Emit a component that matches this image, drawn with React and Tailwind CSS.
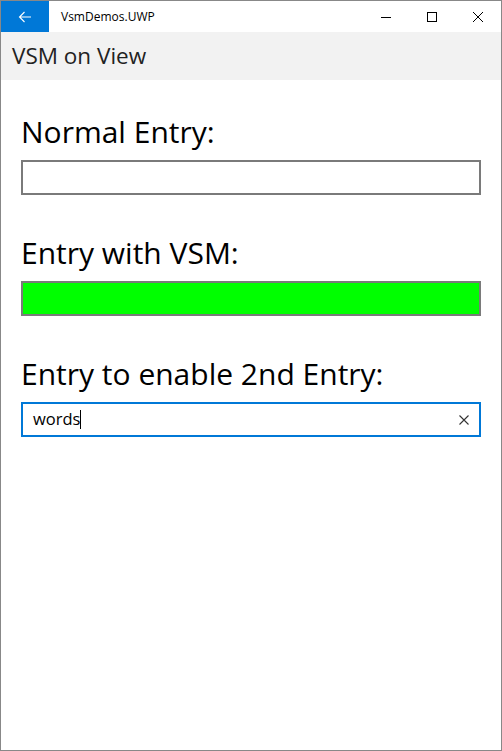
import React from "react";

export default function App() {
  const font = { fontFamily: '"Open Sans", "Noto Sans", sans-serif' };
  return (
    <div className="w-[502px] h-[751px] border border-[#888888] bg-white flex flex-col overflow-hidden" style={font}>
      {/* Title bar */}
      <div className="h-[31px] flex items-center bg-white shrink-0">
        <div className="w-[48px] h-[31px] bg-[#0078d7] flex items-center justify-center">
          <svg width="16" height="16" viewBox="0 0 16 16" fill="none" stroke="white" strokeWidth="1.1">
            <path d="M14 8H2.5M7.5 3L2.5 8l5 5" />
          </svg>
        </div>
        <div className="ml-[12px] text-[12px] text-black">VsmDemos.UWP</div>
        <div className="ml-auto flex items-center h-full">
          <div className="w-[46px] h-full flex items-center justify-center">
            <svg width="10" height="10" viewBox="0 0 10 10"><path d="M0 5.5h10" stroke="black" strokeWidth="1" /></svg>
          </div>
          <div className="w-[46px] h-full flex items-center justify-center">
            <svg width="10" height="10" viewBox="0 0 10 10"><rect x="0.5" y="0.5" width="9" height="9" fill="none" stroke="black" strokeWidth="1" /></svg>
          </div>
          <div className="w-[46px] h-full flex items-center justify-center">
            <svg width="10" height="10" viewBox="0 0 10 10"><path d="M0 0L10 10M10 0L0 10" stroke="black" strokeWidth="1" /></svg>
          </div>
        </div>
      </div>
      {/* Header */}
      <div className="h-[48px] bg-[#f2f2f2] flex items-center pl-[11px] shrink-0">
        <span className="text-[22.5px] text-[#222222]">VSM on View</span>
      </div>
      {/* Content */}
      <div className="flex flex-col px-[20px] pt-[34px]">
        <div className="text-[30px] leading-[36px] text-black">Normal Entry:</div>
        <div className="mt-[10px] h-[35px] border-2 border-[#7a7a7a] bg-white"></div>

        <div className="mt-[40px] text-[30px] leading-[36px] text-black">Entry with VSM:</div>
        <div className="mt-[10px] h-[35px] border-2 border-[#7a7a7a] bg-[#00ff00]"></div>

        <div className="mt-[40px] text-[30px] leading-[36px] text-black">Entry to enable 2nd Entry:</div>
        <div className="mt-[10px] h-[35px] border-2 border-[#0078d7] bg-white flex items-center pl-[10px] pr-[10px]">
          <span className="text-[16.5px] text-black">words</span>
          <span className="w-[1px] h-[19px] bg-black"></span>
          <svg className="ml-auto" width="10" height="10" viewBox="0 0 10 10"><path d="M0.5 0.5L9.5 9.5M9.5 0.5L0.5 9.5" stroke="#333" strokeWidth="1.1" /></svg>
        </div>
      </div>
    </div>
  );
}
